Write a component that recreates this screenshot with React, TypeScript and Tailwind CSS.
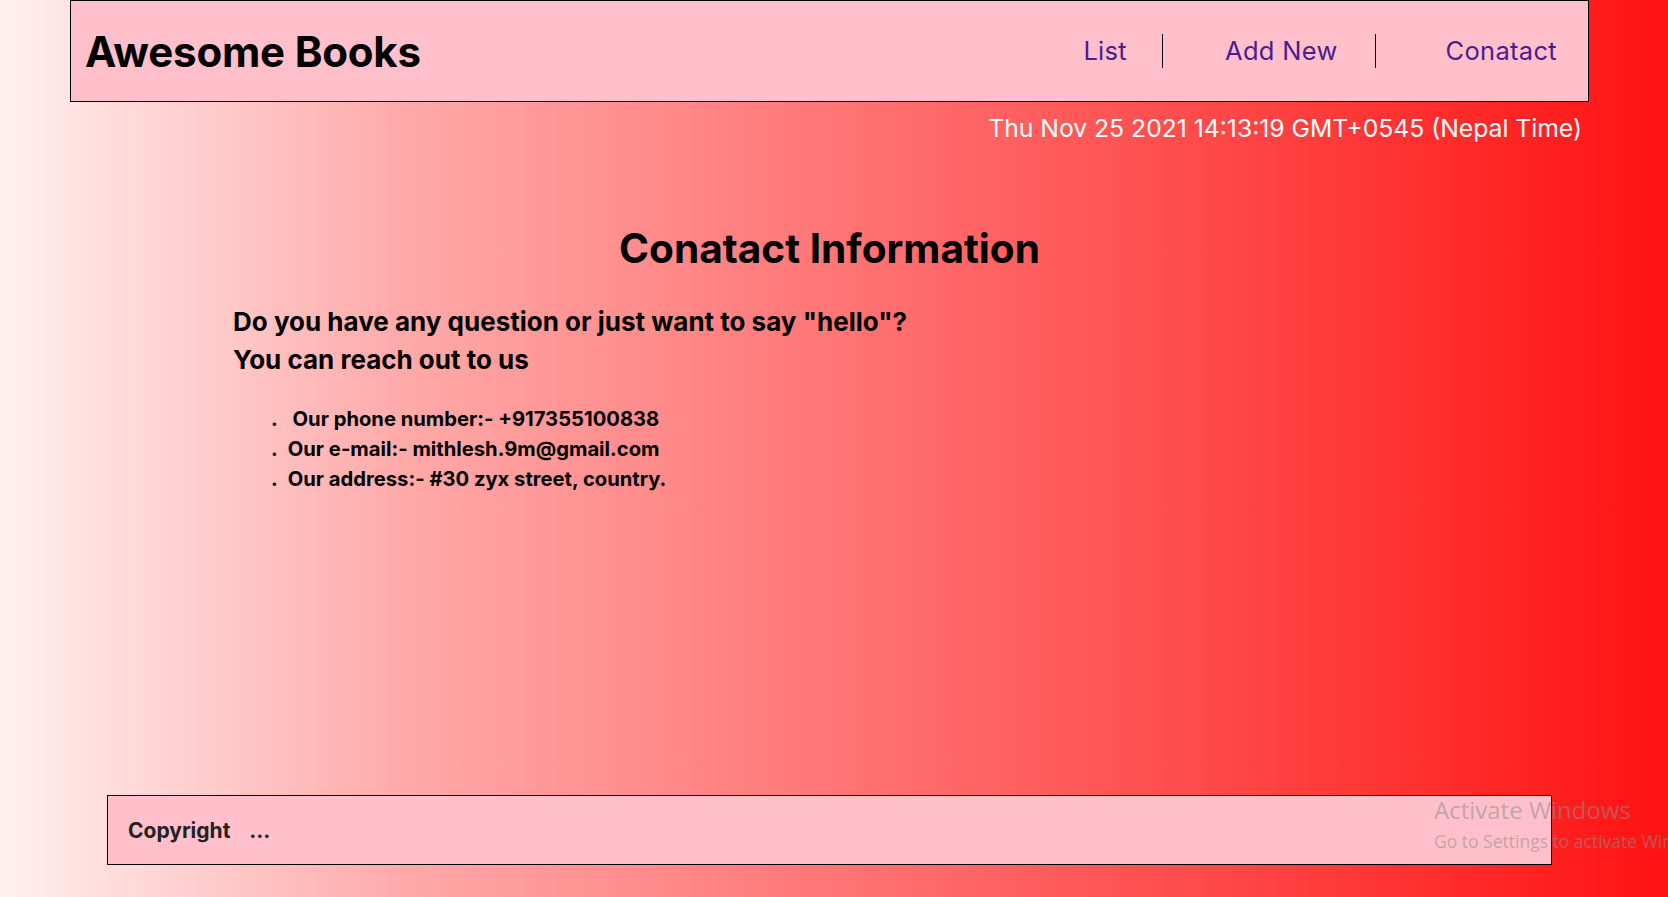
import React from 'react';

const font = { fontFamily: 'Inter, "Noto Sans", sans-serif' };

const navItems = [
  { name: 'List', cls: 'pl-[63px] pr-[35px] border-r border-black' },
  { name: 'Add New', cls: 'pl-[62px] pr-[37px] border-r border-black' },
  { name: 'Conatact', cls: 'pl-[70px] pr-[31px]' },
];

const contacts = [
  { label: '\u00a0Our phone number:- +917355100838' },
  { label: 'Our e-mail:- mithlesh.9m@gmail.com' },
  { label: 'Our address:- #30 zyx street, country.' },
];

function Header() {
  return (
    <header className="ml-[70px] w-[1519px] h-[102px] border border-black bg-[#ffc0cb] flex items-center justify-between pl-[14px]">
      <h1 className="text-[42px] font-bold text-black tracking-[-0.2px]">Awesome Books</h1>
      <nav>
        <ul className="flex items-center">
          {navItems.map((item) => (
            <li key={item.name} className={`h-[34px] flex items-center ${item.cls}`}>
              <a href="#" className="text-[25.5px] text-[#4b1c8c] leading-none tracking-[0.3px]">
                {item.name}
              </a>
            </li>
          ))}
        </ul>
      </nav>
    </header>
  );
}

export default function App() {
  return (
    <div
      style={font}
      className="relative min-h-screen overflow-hidden flex flex-col bg-[linear-gradient(to_right,#fff0f0_0%,#ffaaaa_24%,#ff7777_49%,#ff4a4a_72%,#ff1212_100%)]"
    >
      <Header />

      <div className="w-[1582px] mt-[8px] text-right text-white text-[24.7px] leading-[36px]">
        Thu Nov 25 2021 14:13:19 GMT+0545 (Nepal Time)
      </div>

      <main className="ml-[70px] w-[1519px]">
        <h2 className="mt-[76px] text-center text-[40.6px] leading-[54px] font-bold text-black">
          Conatact Information
        </h2>
        <div className="pl-[163px]">
          <p className="mt-[27px] text-[26px] leading-[38px] font-bold text-black">
            Do you have any question or just want to say "hello"?
            <br />
            You can reach out to us
          </p>
          <ul className="mt-[25px] ml-[38px]">
            {contacts.map((c) => (
              <li key={c.label} className="flex gap-[10px] text-[20.2px] leading-[29.8px] font-bold text-black">
                <span>.</span>
                <span>{c.label}</span>
              </li>
            ))}
          </ul>
        </div>
      </main>

      <footer className="mt-auto mb-[32px] ml-[107px] w-[1445px] h-[70px] border border-black bg-[#ffc0cb] flex items-center pl-[20px]">
        <p className="mt-[2px] text-[21px] font-bold text-[#222]">
          Copyright <span className="ml-[14px]">...</span>
        </p>
      </footer>

      <div
        className="absolute left-[1434px] top-[794px] whitespace-nowrap text-[rgba(140,140,140,0.55)]"
        style={{ fontFamily: '"Open Sans", "Noto Sans", sans-serif' }}
      >
        <div className="text-[24px] leading-[32px]">Activate Windows</div>
        <div className="mt-[3px] text-[17.5px] leading-[24px]">Go to Settings to activate Windows.</div>
      </div>
    </div>
  );
}
